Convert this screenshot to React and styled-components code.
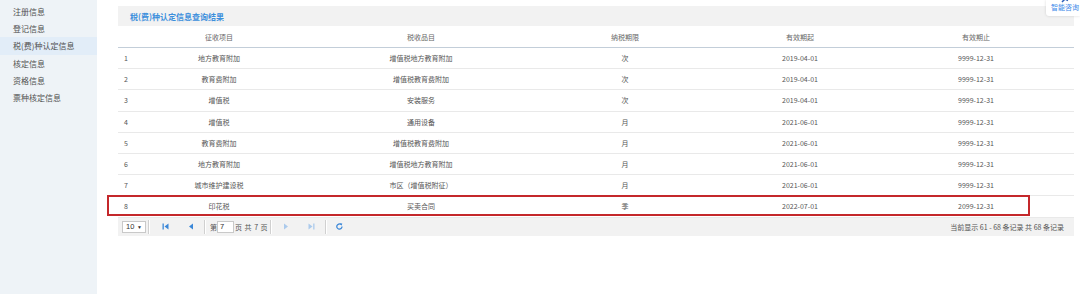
import React from "react";
import styled, { createGlobalStyle } from "styled-components";

const GlobalStyle = createGlobalStyle`
  html, body { margin: 0; padding: 0; background: #fff; }
  body { font-family: "Noto Sans CJK SC", "Noto Sans", sans-serif; color: #555; }
  * { box-sizing: border-box; }
`;

const Page = styled.div`
  display: flex;
  width: 1080px;
  height: 294px;
  position: relative;
  overflow: hidden;
`;

const Sidebar = styled.nav`
  width: 97px;
  flex: none;
  background: #eef3f7;
  padding-top: 3px;
`;

const NavItem = styled.div`
  height: 17.2px;
  line-height: 17px;
  padding-left: 13px;
  font-size: 8px;
  color: #505050;
  white-space: nowrap;
  background: ${(p) => (p.$active ? "#e2edf8" : "transparent")};
`;

const Main = styled.main`
  flex: 1;
  padding: 6px 6px 0 21px;
  position: relative;
`;

const TitleBar = styled.div`
  height: 20px;
  background: #f2f2f2;
  padding-left: 12px;
  display: flex;
  align-items: center;
  font-size: 8px;
  font-weight: 700;
  color: #3d8fdc;
`;

const cols = "24px 154px 250px 158px 192px 160px 18px";

const HeadRow = styled.div`
  display: grid;
  grid-template-columns: ${cols};
  height: 22px;
  border-bottom: 1px solid #c3ced9;
  align-items: center;
  font-size: 7px;
  color: #666;
`;

const Row = styled.div`
  display: grid;
  grid-template-columns: ${cols};
  height: 21.2px;
  border-bottom: 1px solid #e9e9e9;
  align-items: center;
  font-size: 7px;
  color: #555;
  position: relative;
`;

const Cell = styled.div`
  text-align: ${(p) => (p.$left ? "left" : "center")};
  padding-left: ${(p) => (p.$left ? "6px" : "0")};
  white-space: nowrap;
  line-height: 10px;
`;

const Highlight = styled.div`
  position: absolute;
  left: -11px;
  width: 923px;
  top: -1px;
  height: 21px;
  border: 2px solid #c4282b;
  pointer-events: none;
`;

const Pager = styled.div`
  height: 18px;
  background: #f2f2f2;
  display: flex;
  align-items: center;
  padding-left: 4px;
  padding-right: 10px;
  font-size: 7px;
  color: #555;
`;

const SelectBox = styled.div`
  width: 24px;
  height: 12px;
  background: #fff;
  border: 1px solid #c9c9c9;
  display: flex;
  align-items: center;
  justify-content: space-between;
  padding: 0 3px 0 3px;
  font-size: 7.5px;
  color: #333;
  font-family: "Liberation Sans", sans-serif;
`;

const Sep = styled.div`
  width: 2px;
  height: 14px;
  border-left: 1px solid #d0d0d0;
  border-right: 1px solid #fff;
  margin: 0 ${(p) => p.$r ?? 2}px 0 ${(p) => p.$l ?? 2}px;
`;

const PagerBtn = styled.div`
  width: 26px;
  height: 14px;
  display: flex;
  align-items: center;
  justify-content: center;
  color: ${(p) => (p.$disabled ? "#abcaec" : "#3a87d8")};
`;

const PageInput = styled.div`
  width: 17px;
  height: 12px;
  background: #fff;
  border: 1px solid #c9c9c9;
  font-size: 7.5px;
  line-height: 10px;
  padding-left: 2px;
  color: #333;
  font-family: "Liberation Sans", sans-serif;
`;

const PagerText = styled.span`
  white-space: nowrap;
  word-spacing: 1px;
  margin-left: ${(p) => p.$ml || 0}px;
`;

const Info = styled.span`
  margin-left: auto;
  white-space: nowrap;
  font-size: 7px;
  color: #555;
`;

const Widget = styled.div`
  position: absolute;
  right: 0;
  top: 0;
  width: 34px;
  height: 16px;
  background: #fff;
  box-shadow: 0 0 3px rgba(0, 0, 0, 0.15);
  border-bottom-left-radius: 3px;
  padding-left: 5px;
  font-size: 7px;
  line-height: 7px;
  color: #3b87e8;
  white-space: nowrap;
  overflow: hidden;
`;

const WidgetIcon = styled.svg`
  display: block;
  margin: -2px 0 1px 10px;
`;

const navItems = ["注册信息", "登记信息", "税(费)种认定信息", "核定信息", "资格信息", "票种核定信息"];

const rows = [
  ["1", "地方教育附加", "增值税地方教育附加", "次", "2019-04-01", "9999-12-31"],
  ["2", "教育费附加", "增值税教育费附加", "次", "2019-04-01", "9999-12-31"],
  ["3", "增值税", "安装服务", "次", "2019-04-01", "9999-12-31"],
  ["4", "增值税", "通用设备", "月", "2021-06-01", "9999-12-31"],
  ["5", "教育费附加", "增值税教育费附加", "月", "2021-06-01", "9999-12-31"],
  ["6", "地方教育附加", "增值税地方教育附加", "月", "2021-06-01", "9999-12-31"],
  ["7", "城市维护建设税", "市区（增值税附征）", "月", "2021-06-01", "9999-12-31"],
  ["8", "印花税", "买卖合同", "季", "2022-07-01", "2099-12-31"],
];

const FirstIcon = () => (
  <svg width="7" height="7" viewBox="0 0 7 7">
    <rect x="0.5" y="0.5" width="1.3" height="6" fill="currentColor" />
    <path d="M6.5 0.5 L2.5 3.5 L6.5 6.5 Z" fill="currentColor" />
  </svg>
);
const PrevIcon = () => (
  <svg width="6" height="7" viewBox="0 0 6 7">
    <path d="M5 0.5 L1 3.5 L5 6.5 Z" fill="currentColor" />
  </svg>
);
const NextIcon = () => (
  <svg width="6" height="7" viewBox="0 0 6 7">
    <path d="M1 0.5 L5 3.5 L1 6.5 Z" fill="currentColor" />
  </svg>
);
const LastIcon = () => (
  <svg width="7" height="7" viewBox="0 0 7 7">
    <path d="M0.5 0.5 L4.5 3.5 L0.5 6.5 Z" fill="currentColor" />
    <rect x="5.2" y="0.5" width="1.3" height="6" fill="currentColor" />
  </svg>
);
const RefreshIcon = () => (
  <svg width="7" height="7" viewBox="0 0 8 8">
    <path d="M5.6 1.6 A3 3 0 1 0 6.9 4" fill="none" stroke="currentColor" strokeWidth="1.4" />
    <path d="M4.4 0.2 L7.2 0.6 L6.4 3.2 Z" fill="currentColor" />
  </svg>
);

export default function App() {
  return (
    <>
      <GlobalStyle />
      <Page>
        <Sidebar>
          {navItems.map((n, i) => (
            <NavItem key={n} $active={i === 2}>{n}</NavItem>
          ))}
        </Sidebar>
        <Main>
          <TitleBar>税(费)种认定信息查询结果</TitleBar>
          <HeadRow>
            <Cell $left></Cell>
            <Cell>征收项目</Cell>
            <Cell>税收品目</Cell>
            <Cell>纳税期限</Cell>
            <Cell>有效期起</Cell>
            <Cell>有效期止</Cell>
            <Cell />
          </HeadRow>
          {rows.map((r, i) => (
            <Row key={r[0]}>
              <Cell $left>{r[0]}</Cell>
              <Cell>{r[1]}</Cell>
              <Cell>{r[2]}</Cell>
              <Cell>{r[3]}</Cell>
              <Cell>{r[4]}</Cell>
              <Cell>{r[5]}</Cell>
              <Cell />
              {i === rows.length - 1 && <Highlight />}
            </Row>
          ))}
          <Pager>
            <SelectBox>
              <span>10</span>
              <span style={{ fontSize: "5px" }}>▼</span>
            </SelectBox>
            <Sep $l={2} $r={2} />
            <PagerBtn><FirstIcon /></PagerBtn>
            <PagerBtn><PrevIcon /></PagerBtn>
            <Sep $l={0} $r={0} />
            <PagerText $ml={4}>第</PagerText>
            <PageInput>7</PageInput>
            <PagerText $ml={1}>页 共 7 页</PagerText>
            <Sep $l={2} $r={1} />
            <PagerBtn $disabled><NextIcon /></PagerBtn>
            <PagerBtn $disabled><LastIcon /></PagerBtn>
            <Sep $l={0} $r={0} />
            <PagerBtn><RefreshIcon /></PagerBtn>
            <Info>当前显示 61 - 68 条记录 共 68 条记录</Info>
          </Pager>
        </Main>
        <Widget>
          <WidgetIcon width="8" height="5" viewBox="0 0 8 5">
            <path d="M1 4 L4 1 L7 2.5" fill="none" stroke="#2d5fb8" strokeWidth="1.5" />
          </WidgetIcon>
          智能咨询
        </Widget>
      </Page>
    </>
  );
}
